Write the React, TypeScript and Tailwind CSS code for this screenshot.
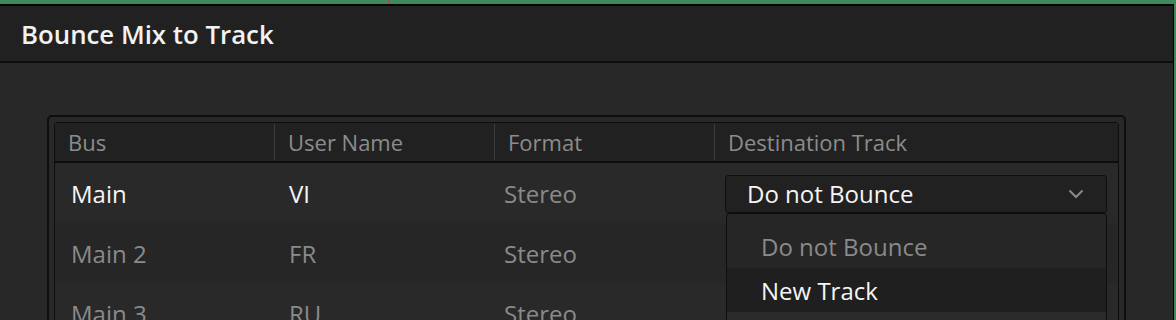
import React from "react";

const font = { fontFamily: '"Open Sans", "Noto Sans", sans-serif' };

function Chevron() {
  return (
    <svg width="16" height="10" viewBox="0 0 16 10" fill="none">
      <path d="M1.5 1.5 L8 8 L14.5 1.5" stroke="#8a8a8a" strokeWidth="2" />
    </svg>
  );
}

const rows = [
  { bus: "Main", user: "VI", fmt: "Stereo", active: true, bg: "bg-[#292929]" },
  { bus: "Main 2", user: "FR", fmt: "Stereo", active: false, bg: "bg-[#262626]" },
  { bus: "Main 3", user: "RU", fmt: "Stereo", active: false, bg: "bg-[#292929]" },
];

export default function App() {
  return (
    <div className="w-[1176px] h-[320px] overflow-hidden bg-[#3f8a5c] relative" style={font}>
      <div className="absolute left-[388px] top-0 w-[2px] h-[4px] bg-[#b04848]" />
      <div className="mt-[4px] w-[1174px] h-[316px] border-t-2 border-r border-black bg-[#282828] flex flex-col">
        <div className="h-[57px] bg-[#212121] border-b-2 border-[#0d0d0d] flex items-center pl-[21px] pt-[1px] shrink-0">
          <span className="text-[25.8px] font-semibold text-[#f2f2f2]">Bounce Mix to Track</span>
        </div>
        <div className="pt-[52px] pl-[47px] pr-[47px]">
          <div className="border-2 border-[#0e0e0e] rounded-[5px] bg-[#282828] pt-[5px] px-[5px] h-[260px]">
            <div className="border border-[#0e0e0e] rounded-t-[3px] h-full relative">
              <div className="flex h-[40px] bg-[#212121] border-b-2 border-[#0d0d0d] text-[22px] text-[#8c8c8c]">
                <div className="w-[220px] flex items-center pl-[13px] border-r border-[#3c3c3c] my-[1px]">Bus</div>
                <div className="w-[220px] flex items-center pl-[13px] border-r border-[#3c3c3c] my-[1px]">User Name</div>
                <div className="w-[220px] flex items-center pl-[13px] border-r border-[#3c3c3c] my-[1px]">Format</div>
                <div className="flex-1 flex items-center pl-[13px]">Destination Track</div>
              </div>
              {rows.map((r, i) => (
                <div key={i} className={`flex h-[60px] text-[24px] pt-[2px] ${r.bg}`}>
                  <div className={`w-[220px] flex items-center pl-[16px] ${r.active ? "text-[#f5f5f5]" : "text-[#8a8a8a]"}`}>{r.bus}</div>
                  <div className={`w-[220px] flex items-center pl-[14px] ${r.active ? "text-[#f5f5f5]" : "text-[#8a8a8a]"}`}>{r.user}</div>
                  <div className="w-[220px] flex items-center pl-[9px] text-[#8a8a8a]">{r.fmt}</div>
                  <div className="flex-1 flex items-center pl-[10px] pr-[11px]">
                    {i === 0 && (
                      <div className="w-full h-[38px] -mt-[1px] border border-[#0e0e0e] rounded-[3px] bg-[#212121] flex items-center justify-between pl-[21px] pr-[22px] text-[#f5f5f5]">
                        <span>Do not Bounce</span>
                        <Chevron />
                      </div>
                    )}
                  </div>
                </div>
              ))}
              <div className="absolute left-[671px] top-[90px] w-[381px] border border-[#0e0e0e] rounded-[3px] bg-[#262626] text-[24px] overflow-hidden pt-[10px]">
                <div className="h-[44px] flex items-center pl-[34px] pt-[1px] text-[#8a8a8a]">Do not Bounce</div>
                <div className="h-[44px] flex items-center pl-[34px] pt-[1px] bg-[#1f1f1f] text-[#f5f5f5]">New Track</div>
                <div className="h-[40px] bg-[#2a2a2a]" />
              </div>
            </div>
          </div>
        </div>
      </div>
    </div>
  );
}
